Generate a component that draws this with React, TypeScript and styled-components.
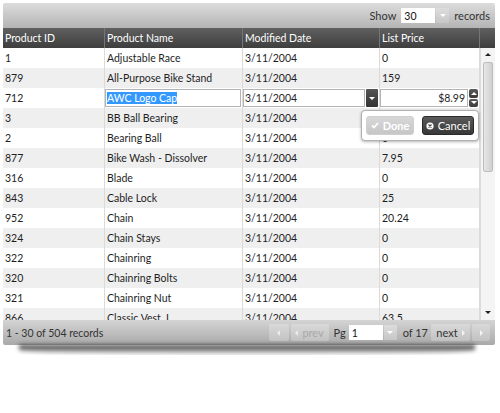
import React from "react";
import styled, { createGlobalStyle, css } from "styled-components";

const GlobalStyle = createGlobalStyle`
  body {
    margin: 0;
    background: #fff;
    font-family: Lato, "Open Sans", "Noto Sans", sans-serif;
  }
`;

const COLS = "102px 138px 137px 100px";

const Wrapper = styled.div`
  width: 492px;
  margin: 3px 0 0 3px;
  font-size: 10.5px;
  color: #1e1e1e;
`;

const Toolbar = styled.div`
  height: 25px;
  display: flex;
  align-items: center;
  justify-content: flex-end;
  gap: 3px;
  padding-right: 5px;
  background: linear-gradient(#dcdcdc, #b4b4b4);
  border-radius: 2px 2px 0 0;
  color: #333;
`;

const SmallInput = styled.div<{ w: number }>`
  width: ${(p) => p.w}px;
  height: 15px;
  background: #fff;
  display: flex;
  align-items: center;
  padding-left: 3px;
  box-sizing: border-box;
  color: #111;
`;

const DropBtn = styled.div<{ dark?: boolean }>`
  width: ${(p) => (p.dark ? 12 : 13)}px;
  height: ${(p) => (p.dark ? 18 : 15)}px;
  display: flex;
  align-items: center;
  justify-content: center;
  border-radius: ${(p) => (p.dark ? "1px" : "0")};
  background: ${(p) => (p.dark ? "linear-gradient(#555, #333)" : "linear-gradient(#ddd, #c6c6c6)")};
  &::before {
    content: "";
    border-left: 3px solid transparent;
    border-right: 3px solid transparent;
    border-top: 3px solid #fff;
  }
`;

const InputGroup = styled.div`
  display: flex;
  align-items: center;
  gap: 1px;
`;

const HeaderRow = styled.div`
  display: grid;
  grid-template-columns: ${COLS} 15px;
  height: 20px;
  background: linear-gradient(#606060, #3e3e3e);
  color: #fff;
`;

const HeaderCell = styled.div`
  display: flex;
  align-items: center;
  padding-left: 2px;
  border-right: 1px solid #767676;
  &:last-child {
    border-right: none;
  }
`;

const BodyArea = styled.div`
  position: relative;
  display: flex;
  height: 272px;
  overflow: hidden;
`;

const Rows = styled.div`
  flex: 1;
`;

const Row = styled.div<{ alt?: boolean }>`
  display: grid;
  grid-template-columns: ${COLS};
  height: 20px;
  background: ${(p) => (p.alt ? "#efefef" : "#fff")};
`;

const Cell = styled.div`
  display: flex;
  align-items: center;
  padding-left: 2px;
  border-right: 1px solid #dadada;
  overflow: hidden;
  white-space: nowrap;
`;

const EditCell = styled.div`
  display: flex;
  align-items: center;
  gap: 1px;
  border-right: 1px solid #dadada;
  padding: 0 1px 0 0;
`;

const EditBox = styled.div<{ right?: boolean }>`
  flex: 1;
  height: 18px;
  border: 1px solid #b4b4b4;
  background: #fff;
  display: flex;
  align-items: center;
  box-sizing: border-box;
  padding: 0 2px 0 1px;
  justify-content: ${(p) => (p.right ? "flex-end" : "flex-start")};
`;

const Selected = styled.span`
  background: #3399ff;
  color: #fff;
`;

const Spinner = styled.div`
  width: 9px;
  height: 18px;
  display: flex;
  flex-direction: column;
  gap: 1px;
`;

const SpinBtn = styled.div<{ up?: boolean }>`
  flex: 1;
  background: linear-gradient(#5a5a5a, #3a3a3a);
  display: flex;
  align-items: center;
  justify-content: center;
  border-radius: 2px;
  &::before {
    content: "";
    border-left: 3px solid transparent;
    border-right: 3px solid transparent;
    ${(p) =>
      p.up
        ? css`border-bottom: 3px solid #fff;`
        : css`border-top: 3px solid #fff;`}
  }
`;

const Scrollbar = styled.div`
  width: 15px;
  background: #f4f4f4;
  border-left: 1px solid #dcdcdc;
  box-sizing: border-box;
  position: relative;
`;

const ScrollThumb = styled.div`
  position: absolute;
  left: 2px;
  right: 2px;
  top: 14px;
  height: 108px;
  background: linear-gradient(90deg, #e6e6e6, #d0d0d0);
  border: 1px solid #bdbdbd;
  border-radius: 2px;
`;

const ScrollArrow = styled.div<{ down?: boolean }>`
  position: absolute;
  left: 4px;
  ${(p) => (p.down ? "bottom: 6px;" : "top: 5px;")}
  border-left: 3px solid transparent;
  border-right: 3px solid transparent;
  ${(p) => (p.down ? "border-top: 3px solid #222;" : "border-bottom: 3px solid #222;")}
`;

const Popup = styled.div`
  position: absolute;
  left: 358px;
  top: 62px;
  width: 118px;
  height: 31px;
  box-sizing: border-box;
  background: #fff;
  border: 1px solid #b0b0b0;
  border-radius: 4px;
  box-shadow: 0 1px 3px rgba(0, 0, 0, 0.3);
  display: flex;
  align-items: center;
  justify-content: center;
  gap: 8px;
`;

const PopBtn = styled.div<{ disabled?: boolean }>`
  height: 19px;
  width: ${(p) => (p.disabled ? 48 : 52)}px;
  box-sizing: border-box;
  border-radius: 3px;
  display: flex;
  align-items: center;
  justify-content: center;
  gap: 4px;
  font-size: 11px;
  color: #fff;
  font-weight: ${(p) => (p.disabled ? 700 : 400)};
  background: ${(p) =>
    p.disabled ? "linear-gradient(#d8d8d8, #c6c6c6)" : "linear-gradient(#5a5a5a, #383838)"};
  border: 1px solid ${(p) => (p.disabled ? "#d0d0d0" : "#2a2a2a")};
`;

const Footer = styled.div`
  height: 25px;
  display: flex;
  align-items: center;
  padding: 0 5px 0 3px;
  background: linear-gradient(#d4d4d4, #a9a9a9);
  border-radius: 0 0 2px 2px;
  color: #333;
`;

const FooterShadow = styled.div`
  height: 10px;
  margin: 0 20px 0 16px;
  background: linear-gradient(rgba(0, 0, 0, 0.85), rgba(0, 0, 0, 0));
  border-radius: 0 0 50% 50%;
  filter: blur(2px);
`;

const Pager = styled.div`
  margin-left: auto;
  display: flex;
  align-items: center;
  gap: 2px;
`;

const PageBtn = styled.div<{ muted?: boolean; w: number }>`
  width: ${(p) => p.w}px;
  height: 17px;
  display: flex;
  align-items: center;
  justify-content: center;
  gap: 4px;
  background: linear-gradient(#d9d9d9, #c2c2c2);
  border-radius: 2px;
  color: ${(p) => (p.muted ? "#a8a8a8" : "#333")};
  font-size: 11px;
`;

const Tri = styled.span<{ dir: "left" | "right"; muted?: boolean }>`
  display: inline-block;
  border-top: 3px solid transparent;
  border-bottom: 3px solid transparent;
  ${(p) =>
    p.dir === "left"
      ? `border-right: 3px solid ${p.muted ? "#ececec" : "#f4f4f4"};`
      : `border-left: 3px solid #f4f4f4;`}
`;

const Label = styled.span<{ l?: number; r?: number }>`
  margin: 0 ${(p) => p.r ?? 2}px 0 ${(p) => p.l ?? 2}px;
  font-size: 11px;
`;

const rows: [string, string, string, string][] = [
  ["1", "Adjustable Race", "3/11/2004", "0"],
  ["879", "All-Purpose Bike Stand", "3/11/2004", "159"],
  ["712", "AWC Logo Cap", "3/11/2004", "$8.99"],
  ["3", "BB Ball Bearing", "3/11/2004", "0"],
  ["2", "Bearing Ball", "3/11/2004", "0"],
  ["877", "Bike Wash - Dissolver", "3/11/2004", "7.95"],
  ["316", "Blade", "3/11/2004", "0"],
  ["843", "Cable Lock", "3/11/2004", "25"],
  ["952", "Chain", "3/11/2004", "20.24"],
  ["324", "Chain Stays", "3/11/2004", "0"],
  ["322", "Chainring", "3/11/2004", "0"],
  ["320", "Chainring Bolts", "3/11/2004", "0"],
  ["321", "Chainring Nut", "3/11/2004", "0"],
  ["866", "Classic Vest, L", "3/11/2004", "63.5"],
];

const CheckIcon = () => (
  <svg width="8" height="7" viewBox="0 0 8 7">
    <path d="M1 3.5 L3 5.5 L7 1" stroke="#fff" strokeWidth="1.8" fill="none" />
  </svg>
);

const CancelIcon = () => (
  <svg width="8" height="8" viewBox="0 0 8 8">
    <circle cx="4" cy="4" r="3.6" fill="#fff" />
    <path d="M2.5 2.5 L5.5 5.5 M5.5 2.5 L2.5 5.5" stroke="#444" strokeWidth="1.2" />
  </svg>
);

export default function App() {
  return (
    <>
      <GlobalStyle />
      <Wrapper>
        <Toolbar>
          <Label r={2}>Show</Label>
          <InputGroup>
            <SmallInput w={34}>30</SmallInput>
            <DropBtn />
          </InputGroup>
          <Label l={2} r={0}>records</Label>
        </Toolbar>
        <HeaderRow>
          <HeaderCell>Product ID</HeaderCell>
          <HeaderCell>Product Name</HeaderCell>
          <HeaderCell>Modified Date</HeaderCell>
          <HeaderCell>List Price</HeaderCell>
          <HeaderCell />
        </HeaderRow>
        <BodyArea>
          <Rows>
            {rows.map((r, i) =>
              i === 2 ? (
                <Row key={r[0]}>
                  <Cell>{r[0]}</Cell>
                  <EditCell>
                    <EditBox>
                      <Selected>{r[1]}</Selected>
                    </EditBox>
                  </EditCell>
                  <EditCell>
                    <EditBox>{r[2]}</EditBox>
                    <DropBtn dark />
                  </EditCell>
                  <EditCell>
                    <EditBox right>{r[3]}</EditBox>
                    <Spinner>
                      <SpinBtn up />
                      <SpinBtn />
                    </Spinner>
                  </EditCell>
                </Row>
              ) : (
                <Row key={r[0]} alt={i % 2 === 1}>
                  <Cell>{r[0]}</Cell>
                  <Cell>{r[1]}</Cell>
                  <Cell>{r[2]}</Cell>
                  <Cell>{r[3]}</Cell>
                </Row>
              )
            )}
          </Rows>
          <Scrollbar>
            <ScrollArrow />
            <ScrollThumb />
            <ScrollArrow down />
          </Scrollbar>
          <Popup>
            <PopBtn disabled>
              <CheckIcon />
              Done
            </PopBtn>
            <PopBtn>
              <CancelIcon />
              Cancel
            </PopBtn>
          </Popup>
        </BodyArea>
        <Footer>
          <span>1 - 30 of 504 records</span>
          <Pager>
            <PageBtn muted w={20}>
              <Tri dir="left" muted />
            </PageBtn>
            <PageBtn muted w={38}>
              <Tri dir="left" muted />
              prev
            </PageBtn>
            <Label l={3} r={1}>Pg</Label>
            <InputGroup>
              <SmallInput w={34}>1</SmallInput>
              <DropBtn />
            </InputGroup>
            <Label l={4} r={1}>of 17</Label>
            <PageBtn w={39}>
              next
              <Tri dir="right" />
            </PageBtn>
            <PageBtn w={18}>
              <Tri dir="right" />
            </PageBtn>
          </Pager>
        </Footer>
        <FooterShadow />
      </Wrapper>
    </>
  );
}
